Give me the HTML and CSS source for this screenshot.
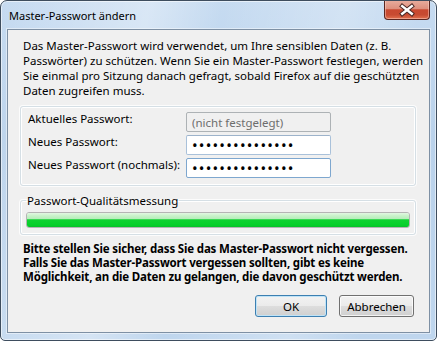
FILE: index.html
```html
<!DOCTYPE html>
<html lang="de">
<head>
  <meta charset="UTF-8" />
  <title>Master-Passwort ändern</title>
  <meta name="viewport" content="width=device-width, initial-scale=1.0" />
  <link rel="stylesheet" href="styles.css">
</head>
<body>
  <div class="window">
    <div class="titlebar">
      <span class="title">Master-Passwort ändern</span>
      <button class="close" aria-label="Schließen">
        <svg width="46" height="19" viewBox="0 0 46 19">
          <path d="M18 6 L28 14 M28 6 L18 14" stroke="#4b2824" stroke-width="4.6" stroke-linecap="square" fill="none"/>
          <path d="M18 6 L28 14 M28 6 L18 14" stroke="#fff" stroke-width="2.6" stroke-linecap="square" fill="none"/>
        </svg>
      </button>
    </div>

    <div class="client">
      <p class="intro">Das Master-Passwort wird verwendet, um Ihre sensiblen Daten (z. B.<br>Passwörter) zu schützen. Wenn Sie ein Master-Passwort festlegen, werden<br>Sie einmal pro Sitzung danach gefragt, sobald Firefox auf die geschützten<br>Daten zugreifen muss.</p>

      <div class="group fields">
        <div class="row">
          <label for="oldpw">Aktuelles Passwort:</label>
          <input type="text" id="oldpw" value="(nicht festgelegt)" disabled>
        </div>
        <div class="row">
          <label for="pw1">Neues Passwort:</label>
          <input type="password" id="pw1" class="secret" value="geheimespasswor">
        </div>
        <div class="row">
          <label for="pw2">Neues Passwort (nochmals):</label>
          <input type="password" id="pw2" class="secret focused" value="geheimespasswor">
        </div>
      </div>

      <fieldset class="group quality">
        <legend>Passwort-Qualitätsmessung</legend>
        <div class="meter"><div class="meter-fill" style="width: 100%"></div></div>
      </fieldset>

      <p class="warning">Bitte stellen Sie sicher, dass Sie das Master-Passwort nicht vergessen.<br>Falls Sie das Master-Passwort vergessen sollten, gibt es keine<br>Möglichkeit, an die Daten zu gelangen, die davon geschützt werden.</p>

      <div class="buttons">
        <button class="btn default ok">OK</button>
        <button class="btn cancel">Abbrechen</button>
      </div>
    </div>
  </div>
</body>
</html>
```

FILE: styles.css
```css
* {
  box-sizing: border-box;
}

body {
  margin: 0;
  font-family: "Noto Sans", "Open Sans", sans-serif;
  font-size: 11.5px;
  color: #000;
  background: #fff;
}

.window {
  position: relative;
  width: 437px;
  height: 341px;
  display: flex;
  flex-direction: column;
  padding: 0 6px 7px 6px;
  border: 1px solid #3e4d5e;
  border-radius: 7px 7px 5px 5px;
  background:
    linear-gradient(100deg, rgba(255,255,255,0) 0%, rgba(255,255,255,0.35) 30%, rgba(255,255,255,0) 45%, rgba(255,255,255,0.25) 70%, rgba(255,255,255,0) 85%),
    linear-gradient(#c6dbf1, #bad2eb 40%, #bfd6ee);
  box-shadow: inset 0 0 0 1px rgba(255,255,255,0.55);
  overflow: hidden;
}

.titlebar {
  height: 28px;
  flex-shrink: 0;
  display: flex;
  align-items: flex-start;
  padding: 7px 0 0 2px;
}

.title {
  font-size: 11px;
  line-height: 15px;
  color: #000;
}

.close {
  position: absolute;
  top: -1px;
  right: 6px;
  width: 46px;
  height: 20px;
  padding: 0;
  border: 1px solid #5a2620;
  border-top: none;
  border-radius: 0 0 4px 4px;
  background: linear-gradient(#e9ae9f 0%, #de907e 45%, #c9482f 52%, #c74b31 78%, #e2714f 100%);
  box-shadow: inset 0 0 0 1px rgba(255,220,210,0.45);
  display: flex;
  align-items: center;
  justify-content: center;
}

.close svg {
  display: block;
}

.client {
  flex: 1;
  min-height: 0;
  display: flex;
  flex-direction: column;
  padding: 8px 13px 0 12px;
  background: #f0f0f0;
  border: 1px solid #7e90a4;
  box-shadow: 0 0 0 1px rgba(255,255,255,0.45);
}

.intro,
.warning {
  margin: 0;
  padding-left: 3px;
  line-height: 15px;
  white-space: nowrap;
}

.group {
  border: 1px solid #d5dfe5;
  border-radius: 3px;
  box-shadow: inset 0 0 0 1px #fff, 0 0 0 1px rgba(255,255,255,0.8);
}

.fields {
  margin-top: 8px;
  padding: 5px 7px 7px 7px;
  display: flex;
  flex-direction: column;
  gap: 3px;
}

.row {
  display: flex;
  align-items: flex-start;
}

.row label {
  width: 158px;
  flex-shrink: 0;
  line-height: 15px;
  margin-top: -1px;
  white-space: nowrap;
}

.row input {
  width: 145px;
  height: 20px;
  padding: 0 5px;
  font-family: inherit;
  font-size: 11.5px;
  background: #fff;
  border: 1px solid #a9c1da;
  border-top-color: #9db3cb;
  border-radius: 2px;
  outline: none;
}

.row input:disabled {
  background: #f0f0f0;
  border-color: #adb2b5;
  color: #6d6d6d;
}

.row input.secret {
  font-size: 15px;
  letter-spacing: 1.2px;
}

.row input.focused {
  border-color: #7ea7cf;
}

.quality {
  margin: 7px 0 0 0;
  padding: 4px 5px 6px 5px;
  min-width: 0;
}

.quality legend {
  padding: 0 1px;
  line-height: 15px;
}

.meter {
  height: 16px;
  border: 1px solid #b4b4b4;
  border-radius: 3px;
  background: #e6e6e6;
  overflow: hidden;
}

.meter-fill {
  height: 100%;
  background: linear-gradient(#e2f7e2 0%, #c8f2ca 20%, #b5edb9 42%, #10d232 48%, #06d02a 85%, #08c02a 100%);
}

.warning {
  margin-top: 7px;
  font-weight: bold;
  line-height: 14px;
  letter-spacing: -0.17px;
}

.buttons {
  margin-top: 11px;
  margin-right: 2px;
  display: flex;
  justify-content: flex-end;
  gap: 12px;
}

.btn {
  height: 22px;
  padding: 0;
  font-family: inherit;
  font-size: 11.5px;
  color: #000;
  border: 1px solid #707070;
  border-radius: 3px;
  background: linear-gradient(#f2f2f2 0%, #ebebeb 48%, #dddddd 52%, #cfcfcf 100%);
  box-shadow: inset 0 0 0 1px rgba(255,255,255,0.75);
  cursor: pointer;
}

.btn.ok {
  width: 72px;
}

.btn.cancel {
  width: 75px;
}

.btn.default {
  border-color: #3c7fb1;
  box-shadow: inset 0 0 0 1px #bfe3f7;
}
```
